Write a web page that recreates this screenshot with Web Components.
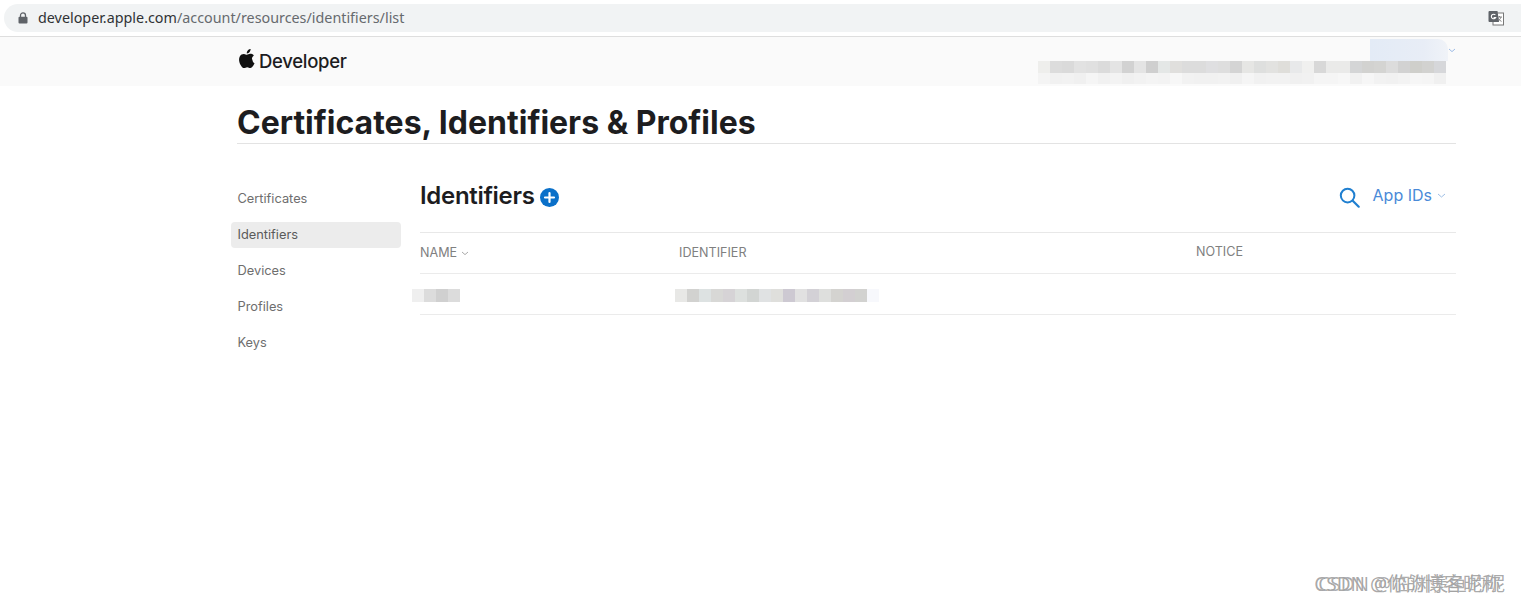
<!DOCTYPE html>
<html>
<head>
<meta charset="utf-8">
<style>
  html, body { margin: 0; padding: 0; background: #fff; }
  body { font-family: Inter, "Liberation Sans", sans-serif; width: 1521px; height: 604px; overflow: hidden; position: relative; }
</style>
</head>
<body>
<browser-bar></browser-bar>
<dev-header></dev-header>
<page-title>Certificates, Identifiers &amp; Profiles</page-title>
<page-body>
  <side-nav slot="nav">
    <nav-item>Certificates</nav-item>
    <nav-item active>Identifiers</nav-item>
    <nav-item>Devices</nav-item>
    <nav-item>Profiles</nav-item>
    <nav-item>Keys</nav-item>
  </side-nav>
  <id-panel slot="main"></id-panel>
</page-body>
<water-mark></water-mark>

<script>
class BrowserBar extends HTMLElement {
    constructor() {
        super();
        this.attachShadow({ mode: "open" });
        this.shadowRoot.innerHTML = `
            <style>
                :host { display: block; height: 37px; box-sizing: border-box; padding: 4px 0 4px 4px; border-bottom: 1px solid #dedede; background: #fff; }
                .bar { height: 28px; background: #f1f3f4; border-radius: 14px 0 0 14px; display: flex; align-items: center; padding: 0 17px 0 14px; }
                svg.lock { width: 10px; height: 12px; margin-right: 10px; }
                .url { font: 14.33px "Noto Sans", sans-serif; color: #666a6e; flex: 1; white-space: nowrap; margin-top: -1px; }
                .url b { font-weight: 400; color: #303235; }
                svg.tr { width: 16px; height: 16px; }
            </style>
            <div class="bar">
                <svg class="lock" viewBox="0 0 10 12"><path d="M2.5 5V3.4a2.5 2.5 0 0 1 5 0V5" fill="none" stroke="#5f6368" stroke-width="1.3"/><rect x="0.5" y="4.8" width="9" height="6.7" rx="1" fill="#5f6368"/></svg>
                <span class="url"><b>developer.apple.com</b>/account/resources/identifiers/list</span>
                <svg class="tr" viewBox="0 0 16 16">
                    <rect x="5" y="3" width="10.5" height="12" fill="#fff" stroke="#777" stroke-width="1"/>
                    <path d="M9 7h5M11.5 6v1M13 7c-.5 2-2 3.5-3.5 4.2M10 8.2c.7 1.4 2 2.6 3.5 3.2" fill="none" stroke="#777" stroke-width="0.9"/>
                    <path d="M1.5 1h8l1.5 11H1.5a1 1 0 0 1-1-1V2a1 1 0 0 1 1-1z" fill="#5f6368"/>
                    <path d="M7.4 5a2.3 2.3 0 1 0 .3 2.6H5.6" fill="none" stroke="#fff" stroke-width="1.1"/>
                </svg>
            </div>
        `;
    }
}

// blocs de mosaico (texto borrado no original)
class PixelBlur extends HTMLElement {
    constructor() {
        super();
        this.attachShadow({ mode: "open" });
        const cell = this.getAttribute("cell") || 12;
        const h = this.getAttribute("h") || 12;
        const cells = (this.getAttribute("colors") || "").split(",");
        this.shadowRoot.innerHTML = `
            <style>
                :host { display: flex; }
                i { display: block; width: ${cell}px; height: ${h}px; filter: blur(0.4px); }
            </style>
            ${cells.map(c => `<i style="background:${c}"></i>`).join("")}
        `;
    }
}

class DevHeader extends HTMLElement {
    constructor() {
        super();
        this.attachShadow({ mode: "open" });
        this.shadowRoot.innerHTML = `
            <style>
                :host { display: block; height: 49px; background: #fafafa; box-sizing: border-box; padding: 0 75px 0 237px; }
                .wrap { display: flex; justify-content: space-between; height: 100%; }
                .logo { display: flex; align-items: center; gap: 4px; font: 500 18.5px Inter, sans-serif; letter-spacing: -0.3px; color: #1d1d1f; padding-bottom: 1px; }
                .logo svg { width: 18px; height: 21px; margin-bottom: 5px; }
                .acct { display: flex; flex-direction: column; align-items: flex-end; padding-top: 2px; }
                .who { display: flex; align-items: center; height: 22px; margin-right: -2px; position: relative; }
                .name { width: 78px; height: 22px; background: linear-gradient(90deg, #e3ebf6, #e8edf6 70%, #f0f3f8); border-radius: 0 10px 0 0; }
                .who svg { width: 8px; height: 5px; position: absolute; left: 78px; top: 9px; }
            </style>
            <div class="wrap">
                <div class="logo">
                    <svg viewBox="0 0 18 21"><path fill="#111" d="M14.9 11.1c0-2.3 1.9-3.4 2-3.5-1.1-1.6-2.8-1.8-3.4-1.8-1.4-.2-2.8.9-3.6.9-.7 0-1.9-.9-3.1-.8-1.6 0-3.1.9-3.9 2.3-1.7 2.9-.4 7.2 1.2 9.5.8 1.2 1.8 2.4 3 2.4 1.2 0 1.7-.8 3.1-.8 1.5 0 1.9.8 3.1.8 1.3 0 2.1-1.2 2.9-2.3.9-1.3 1.3-2.6 1.3-2.7-.1 0-2.1-.9-2.1-3.4zM12.6 4.1c.6-.8 1.1-1.9 1-3-1 0-2.1.6-2.8 1.4-.6.7-1.1 1.8-1 2.9 1.1.1 2.2-.5 2.8-1.3z"/></svg>
                    <span>Developer</span>
                </div>
                <div class="acct">
                    <div class="who"><div class="name"></div><svg viewBox="0 0 8 5"><path d="M1 1l3 2.6L7 1" fill="none" stroke="#9dbbe6" stroke-width="1"/></svg></div>
                    <pixel-blur h="12" colors="#eeeeec,#dcdcdc,#dadada,#e2e2e2,#e0e0e0,#dbdbdb,#e4e4e4,#d2d2d2,#e4e4e4,#cfcfcf,#e4e7e6,#e0dfdd,#dcdcdc,#dcdcdc,#dfdfe1,#dedede,#d4d4d4,#e6e6e4,#dedfde,#e2e2e0,#dfdeda,#e8e9ea,#f0f0ef,#d8d8d8,#eaeae9,#eaeae9,#d4d5d6,#d2d2d0,#d4d4d2,#dcdcdc,#d2d2d2,#cfcfcb,#d2d2d0,#d6d7da"></pixel-blur>
                    <pixel-blur h="11" colors="#f4f4f4,#f1f1f1,#f2f2f2,#f0f0f0,#f5f5f5,#f1f1f1,#f3f3f3,#f0f0f0,#f2f2f2,#f4f4f4,#f3f3f3,#f7f7f7,#f2f2f2,#f1f1f1,#f1f1f1,#f2f2f2,#f0f0f0,#f5f5f5,#f1f1f1,#f2f2f2,#f2f2f2,#f0f0f0,#f1f1f1,#f5f5f5,#f5f5f5,#f7f7f7,#f1f1f1,#f6f6f6,#f2f2f2,#f1f1f1,#f3f3f3,#f6f6f6,#f5f5f5,#f0f0f0"></pixel-blur>
                </div>
            </div>
        `;
    }
}

class PageTitle extends HTMLElement {
    constructor() {
        super();
        this.attachShadow({ mode: "open" });
        this.shadowRoot.innerHTML = `
            <style>
                :host { display: block; margin: 0 65px 0 237px; height: 58px; box-sizing: border-box; border-bottom: 1px solid #e3e3e3; }
                h1 { margin: 0; padding-top: 17px; font: 700 32px/40px Inter, sans-serif; color: #1d1d1f; white-space: nowrap; }
            </style>
            <h1><slot></slot></h1>
        `;
    }
}

class PageBody extends HTMLElement {
    constructor() {
        super();
        this.attachShadow({ mode: "open" });
        this.shadowRoot.innerHTML = `
            <style>
                :host { display: flex; margin: 0 65px 0 231px; gap: 19px; }
                .nav { width: 170px; flex: none; padding-top: 42px; }
                .main { flex: 1; min-width: 0; }
            </style>
            <div class="nav"><slot name="nav"></slot></div>
            <div class="main"><slot name="main"></slot></div>
        `;
    }
}

class SideNav extends HTMLElement {
    constructor() {
        super();
        this.attachShadow({ mode: "open" });
        this.shadowRoot.innerHTML = `
            <style>
                :host { display: flex; flex-direction: column; gap: 10px; }
            </style>
            <slot></slot>
        `;
    }
}

class NavItem extends HTMLElement {
    constructor() {
        super();
        this.attachShadow({ mode: "open" });
        this.shadowRoot.innerHTML = `
            <style>
                :host { display: block; height: 26px; padding-left: 6.5px; border-radius: 4px; font: 400 12.8px/26px Inter, sans-serif; color: #6e6e6e; }
                :host([active]) { background: #ececec; color: #5a5a5a; }
            </style>
            <slot></slot>
        `;
    }
}

class IdPanel extends HTMLElement {
    constructor() {
        super();
        this.attachShadow({ mode: "open" });
        this.shadowRoot.innerHTML = `
            <style>
                :host { display: block; }
                .top { height: 89px; box-sizing: border-box; display: flex; justify-content: space-between; align-items: flex-start; padding-top: 36px; border-bottom: 1px solid #e8e8e8; }
                .head { display: flex; align-items: center; gap: 5px; }
                h2 { margin: 0; font: 600 24px/32px Inter, sans-serif; letter-spacing: -0.3px; color: #1d1d1f; }
                .plus { width: 19px; height: 19px; margin-top: 3px; }
                .tools { display: flex; align-items: center; padding-right: 10px; color: #4a8ad8; font: 400 16px/30px Inter, sans-serif; }
                .mag { width: 21px; height: 21px; margin-right: 13px; margin-top: 5px; margin-left: -1px; }
                .chev { width: 9px; height: 6px; margin-left: 5px; margin-top: 2px; }
                .row { display: grid; grid-template-columns: 259px 517px 1fr; height: 41px; box-sizing: border-box; border-bottom: 1px solid #ebebeb; align-items: center; }
                .th { font: 400 12.6px Inter, sans-serif; color: #808080; display: flex; align-items: center; gap: 4px; margin-top: -2px; }
                .th svg { width: 8px; height: 5px; margin-top: 2px; }
                .th.n { margin-top: -4px; }
                pixel-blur { height: 13px; margin-top: 3px; }
                .b1 { margin-left: -8px; }
                .b2 { margin-left: -4px; }
            </style>
            <div class="top">
                <div class="head">
                    <h2>Identifiers</h2>
                    <svg class="plus" viewBox="0 0 19 19"><circle cx="9.5" cy="9.5" r="9.5" fill="#0a70c9"/><path d="M9.5 5v9M5 9.5h9" stroke="#fff" stroke-width="2.2" stroke-linecap="round"/></svg>
                </div>
                <div class="tools">
                    <svg class="mag" viewBox="0 0 21 21"><circle cx="8.6" cy="8.6" r="6.8" fill="none" stroke="#1f7fd0" stroke-width="2"/><path d="M13.7 13.7l6 6" stroke="#1f7fd0" stroke-width="2.2" stroke-linecap="round"/></svg>
                    <span>App IDs</span>
                    <svg class="chev" viewBox="0 0 9 6"><path d="M1 1l3.5 3L8 1" fill="none" stroke="#9fbfe6" stroke-width="1"/></svg>
                </div>
            </div>
            <div class="row">
                <div class="th">NAME <svg viewBox="0 0 8 5"><path d="M1 1l3 2.6L7 1" fill="none" stroke="#aaa" stroke-width="1"/></svg></div>
                <div class="th">IDENTIFIER</div>
                <div class="th n">NOTICE</div>
            </div>
            <div class="row">
                <pixel-blur class="b1" h="13" colors="#efefef,#dcdcdc,#d0d0d0,#dcdcdc"></pixel-blur>
                <pixel-blur class="b2" h="13" colors="#e8e8e6,#d2d2d0,#dde2e2,#d8d8d6,#d6d3d6,#dde0de,#d2d5d3,#e0e2e3,#dfdfdc,#cdc9d2,#e1e1e1,#d3d1d6,#dedfdd,#d4d3d0,#d3cfd2,#d2d2d0,#f7f8fc"></pixel-blur>
                <div></div>
            </div>
        `;
    }
}

// marca de agua: dos textos superpuestos, como en la captura
class WaterMark extends HTMLElement {
    constructor() {
        super();
        this.attachShadow({ mode: "open" });
        this.shadowRoot.innerHTML = `
            <style>
                :host { position: absolute; right: 16px; top: 573px; width: 192px; height: 22px; font: 19px/22px "Noto Sans", "Noto Sans CJK SC", sans-serif; color: rgba(120,120,120,0.65); white-space: nowrap; }
                span { position: absolute; top: 0; right: 0; text-shadow: 0 0 1px rgba(255,255,255,0.9); }
                .b { right: 4px; }
            </style>
            <span>CSDN @临渊羡鱼的昵</span>
            <span class="b">CSDN @你的博客昵称</span>
        `;
    }
}

customElements.define("browser-bar", BrowserBar);
customElements.define("pixel-blur", PixelBlur);
customElements.define("dev-header", DevHeader);
customElements.define("page-title", PageTitle);
customElements.define("page-body", PageBody);
customElements.define("side-nav", SideNav);
customElements.define("nav-item", NavItem);
customElements.define("id-panel", IdPanel);
customElements.define("water-mark", WaterMark);
</script>
</body>
</html>
